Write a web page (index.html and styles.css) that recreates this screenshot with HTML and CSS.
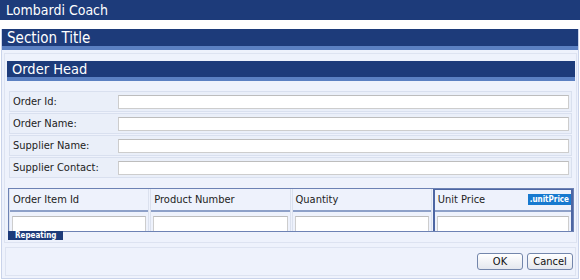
FILE: index.html
```html
<!DOCTYPE html>
<html lang="en">
<head>
    <meta charset="UTF-8">
    <title>Lombardi Coach</title>
    <link rel="stylesheet" href="styles.css">
</head>
<body>
    <div class="app-bar">Lombardi Coach</div>

    <div class="section">
        <div class="section-title">Section Title</div>
        <div class="section-body">
            <div class="panel">
                <div class="panel-title">Order Head</div>

                <div class="fields">
                    <div class="field"><label>Order Id:</label><input type="text"></div>
                    <div class="field"><label>Order Name:</label><input type="text"></div>
                    <div class="field"><label>Supplier Name:</label><input type="text"></div>
                    <div class="field"><label>Supplier Contact:</label><input type="text"></div>
                </div>

                <div class="grid-wrap">
                    <div class="grid">
                        <div class="col">
                            <div class="col-head">Order Item Id</div>
                            <div class="col-cell"><input type="text"></div>
                        </div>
                        <div class="col">
                            <div class="col-head">Product Number</div>
                            <div class="col-cell"><input type="text"></div>
                        </div>
                        <div class="col">
                            <div class="col-head">Quantity</div>
                            <div class="col-cell"><input type="text"></div>
                        </div>
                        <div class="col selected">
                            <div class="col-head">Unit Price <span class="badge">.unitPrice</span></div>
                            <div class="col-cell"><input type="text"></div>
                        </div>
                    </div>
                    <div class="repeating">Repeating</div>
                </div>
            </div>

            <div class="button-bar">
                <button>OK</button>
                <button>Cancel</button>
            </div>
        </div>
    </div>
</body>
</html>
```

FILE: styles.css
```css
body {
    margin: 0;
    padding: 0;
    background-color: #ffffff;
    font-family: "DejaVu Sans Condensed", "DejaVu Sans", Tahoma, sans-serif;
    color: #222;
}

.app-bar {
    height: 20px;
    line-height: 21px;
    padding-left: 6px;
    background-color: #1d3b7a;
    color: #fff;
    font-size: 14px;
}

.section {
    margin: 9px 1px 0 1px;
    border: 1px solid #c9d3ea;
    border-top: none;
    background-color: #eef2fc;
}

.section-title {
    height: 17px;
    line-height: 18px;
    padding-left: 5px;
    margin-top: 1px;
    background-color: #1d3b7a;
    border-bottom: 4px solid #5b80c2;
    color: #fff;
    font-size: 15px;
}

.section-body {
    padding: 3px 1px 2px 2px;
}

.panel {
    border: 1px solid #dde3f1;
    padding: 7px 1px 3px 2px;
}

.panel-title {
    height: 16px;
    line-height: 17px;
    padding-left: 5px;
    background-color: #1d3b7a;
    border-bottom: 4px solid #5b80c2;
    color: #fff;
    font-size: 14.5px;
}

.fields {
    display: flex;
    flex-direction: column;
    gap: 1px;
    padding: 10px 3px 0 2px;
}

.field {
    display: flex;
    align-items: center;
    height: 19px;
    border: 1px solid #d9e0ef;
    background-color: #eaeff9;
    padding: 0 2px 0 3px;
    font-size: 11px;
}

.field label {
    width: 105px;
    flex: none;
}

.field input,
.col-cell input {
    flex: 1;
    min-width: 0;
    height: 14px;
    box-sizing: border-box;
    border: 1px solid #cdcdcd;
    border-top-color: #bdbdbd;
    background-color: #fff;
    margin: 0;
    padding: 0;
}

.grid-wrap {
    position: relative;
    margin: 10px 1px 0 1px;
    padding-bottom: 7px;
}

.grid {
    display: grid;
    grid-template-columns: repeat(4, 1fr);
    column-gap: 1px;
    border: 1px solid #6d82b4;
    height: 42px;
    overflow: hidden;
    background-color: #eef2fc;
}

.col {
    display: flex;
    flex-direction: column;
    min-width: 0;
    border-left: 1px solid #dbe1ee;
    border-right: 1px solid #dbe1ee;
}

.col-head {
    height: 21px;
    padding: 0 1px 0 3px;
    border-bottom: 2px solid #8da0c8;
    font-size: 11px;
    display: flex;
    align-items: center;
    justify-content: space-between;
}

.col-cell {
    display: flex;
    padding: 4px 2px 0 2px;
}

.col-cell input {
    height: 18px;
}

.col.selected {
    border: 2px solid #4d66a3;
    border-bottom: none;
    margin-top: -1px;
}

.col.selected .col-head {
    height: 19px;
    padding-right: 0;
    padding-bottom: 1px;
}

.badge {
    background-color: #1779cf;
    color: #fff;
    font-size: 8px;
    font-weight: bold;
    line-height: 11px;
    padding: 0 2px;
}

.repeating {
    position: absolute;
    left: 0;
    top: 43px;
    width: 48px;
    height: 9px;
    line-height: 9px;
    padding-left: 7px;
    background-color: #1d3b7a;
    color: #fff;
    font-size: 8px;
    font-weight: bold;
}

.button-bar {
    display: flex;
    justify-content: flex-end;
    gap: 4px;
    margin: 4px 1px 0 1px;
    padding: 5px 2px 5px 0;
    border: 1px solid #dde3f1;
}

.button-bar button {
    font-family: inherit;
    font-size: 11px;
    width: 46px;
    height: 17px;
    padding: 0;
    border: 1px solid #7386ab;
    border-radius: 3px;
    background: linear-gradient(#ffffff, #e4e7ee);
    color: #111;
}
```
